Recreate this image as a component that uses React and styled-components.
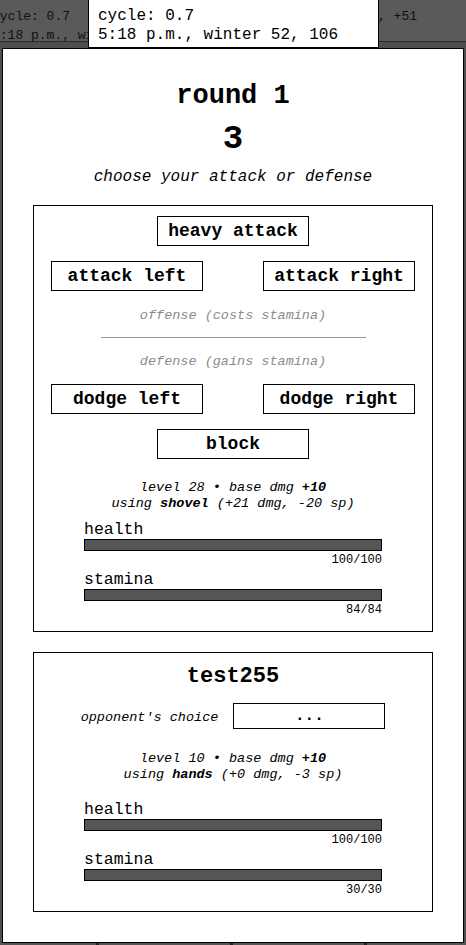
import React from 'react'
import styled, { createGlobalStyle } from 'styled-components'

const GlobalStyle = createGlobalStyle`
  html, body {
    margin: 0;
    padding: 0;
  }
  body {
    background: #4f4f4f;
    font-family: "Liberation Mono", "Courier New", monospace;
    color: #000;
  }
`

const fighters = {
  me: {
    level: 28,
    base: '+10',
    weapon: 'shovel',
    mods: '(+21 dmg, -20 sp)',
    health: [100, 100],
    stamina: [84, 84],
  },
  foe: {
    name: 'test255',
    level: 10,
    base: '+10',
    weapon: 'hands',
    mods: '(+0 dmg, -3 sp)',
    health: [100, 100],
    stamina: [30, 30],
  },
}

function Stat({ label, value, top }) {
  const [cur, max] = value
  return (
    <>
      <StatLabel $top={top}>{label}</StatLabel>
      <Bar>
        <Fill style={{ width: `${(cur / max) * 100}%` }} />
      </Bar>
      <StatValue>{cur}/{max}</StatValue>
    </>
  )
}

function Stats({ f, top, healthTop }) {
  return (
    <>
      <Info $top={top}>
        level {f.level} • base dmg <b>{f.base}</b>
        <br />
        using <b>{f.weapon}</b> {f.mods}
      </Info>
      <StatBlock>
        <Stat label="health" value={f.health} top={healthTop} />
        <Stat label="stamina" value={f.stamina} top={3} />
      </StatBlock>
    </>
  )
}

function App() {
  const me = fighters.me
  const foe = fighters.foe
  return (
    <Root>
      <GlobalStyle />
      <Header>
        <HeaderLeft>
          cycle: 0.7
          <br />
          5:18 p.m., winter 52, 106
        </HeaderLeft>
        <HeaderRight>marks: 1,204, +51</HeaderRight>
      </Header>

      <Tooltip>
        cycle: 0.7
        <br />
        5:18 p.m., winter 52, 106
      </Tooltip>

      <Modal>
        <Title>round 1</Title>
        <Countdown>3</Countdown>
        <Prompt>choose your attack or defense</Prompt>

        <Panel $top={18} $pad={10}>
          <Action>heavy attack</Action>
          <ActionRow>
            <Action>attack left</Action>
            <Action>attack right</Action>
          </ActionRow>
          <Hint $top={17}>offense (costs stamina)</Hint>
          <Divider />
          <Hint $top={16}>defense (gains stamina)</Hint>
          <ActionRow $top={14}>
            <Action>dodge left</Action>
            <Action>dodge right</Action>
          </ActionRow>
          <ActionRow $center>
            <Action>block</Action>
          </ActionRow>
          <Stats f={me} top={21} healthTop={8} />
        </Panel>

        <Panel $top={20} $pad={12}>
          <Name>{foe.name}</Name>
          <ChoiceRow>
            <ChoiceLabel>opponent's choice</ChoiceLabel>
            <ChoiceBox>...</ChoiceBox>
          </ChoiceRow>
          <Stats f={foe} top={22} healthTop={17} />
        </Panel>
      </Modal>

      <Strip>
        <span />
        <span />
        <span />
        <span />
      </Strip>
    </Root>
  )
}

export default App

const Root = styled.div`
  position: relative;
  height: 945px;
  overflow: hidden;
  background: #4f4f4f;
`

const Header = styled.div`
  height: 42px;
  box-sizing: border-box;
  padding-top: 7px;
  display: flex;
  justify-content: space-between;
  background: #5a5a5a;
  border-bottom: 1px solid #2a2a2a;
  font-size: 13px;
  line-height: 19px;
  color: #111;
  white-space: nowrap;
`

const HeaderLeft = styled.div`
  margin-left: -8px;
`

const HeaderRight = styled.div`
  padding-right: 49px;
`

const Tooltip = styled.div`
  position: absolute;
  top: -1px;
  left: 88px;
  width: 291px;
  height: 49px;
  box-sizing: border-box;
  padding: 7px 0 0 9px;
  background: #fff;
  border: 1px solid #000;
  font-size: 16px;
  line-height: 19px;
  white-space: nowrap;
`

const Modal = styled.div`
  margin: 6px 2px 0;
  height: 895px;
  box-sizing: border-box;
  padding-top: 32px;
  display: flex;
  flex-direction: column;
  align-items: center;
  background: #fff;
  border: 1px solid #000;
`

const Title = styled.div`
  font-size: 27px;
  font-weight: bold;
  line-height: 30px;
`

const Countdown = styled.div`
  margin-top: 10px;
  font-size: 34px;
  font-weight: bold;
  line-height: 36px;
`

const Prompt = styled.div`
  margin-top: 10px;
  font-size: 16px;
  font-style: italic;
  line-height: 20px;
`

const Panel = styled.div`
  width: 400px;
  box-sizing: border-box;
  margin-top: ${p => p.$top}px;
  padding: ${p => p.$pad}px 0 14px;
  display: flex;
  flex-direction: column;
  align-items: center;
  border: 1px solid #000;
`

const ActionRow = styled.div`
  align-self: stretch;
  margin-top: ${p => (p.$top != null ? p.$top : 15)}px;
  padding: 0 17px;
  display: flex;
  justify-content: ${p => (p.$center ? 'center' : 'space-between')};
`

const Action = styled.button`
  width: 152px;
  height: 30px;
  box-sizing: border-box;
  padding: 0;
  background: #fff;
  border: 1px solid #000;
  border-radius: 0;
  font-family: "Liberation Mono", "Courier New", monospace;
  font-size: 18px;
  font-weight: bold;
  color: #000;
  cursor: pointer;
`

const Hint = styled.div`
  margin-top: ${p => p.$top}px;
  font-size: 13.5px;
  font-style: italic;
  line-height: 16px;
  color: #8c8c8c;
`

const Divider = styled.div`
  width: 265px;
  height: 1px;
  margin-top: 13px;
  background: #999;
`

const Info = styled.div`
  margin-top: ${p => p.$top}px;
  font-size: 13.5px;
  font-style: italic;
  line-height: 16px;
  text-align: center;
`

const StatBlock = styled.div`
  width: 298px;
  display: flex;
  flex-direction: column;
`

const StatLabel = styled.div`
  margin-top: ${p => p.$top}px;
  font-size: 16.5px;
  line-height: 20px;
`

const Bar = styled.div`
  margin-top: -1px;
  height: 12px;
  box-sizing: border-box;
  border: 1px solid #000;
  background: #fff;
`

const Fill = styled.div`
  height: 100%;
  background: #555;
`

const StatValue = styled.div`
  padding-top: 2px;
  font-size: 12px;
  line-height: 14px;
  text-align: right;
`

const Name = styled.div`
  font-size: 22px;
  font-weight: bold;
  line-height: 24px;
`

const ChoiceRow = styled.div`
  margin-top: 14px;
  display: flex;
  align-items: center;
  gap: 15px;
`

const ChoiceLabel = styled.span`
  padding-top: 4px;
  font-size: 13.5px;
  font-style: italic;
  line-height: 16px;
`

const ChoiceBox = styled.div`
  width: 152px;
  height: 26px;
  box-sizing: border-box;
  display: flex;
  align-items: center;
  justify-content: center;
  border: 1px solid #000;
  font-size: 16px;
  font-weight: bold;
`

const Strip = styled.div`
  height: 2px;
  display: grid;
  grid-template-columns: 96px 131px 131px 1fr;
  column-gap: 3px;
  background: #222;
  span {
    background: #555;
  }
`
